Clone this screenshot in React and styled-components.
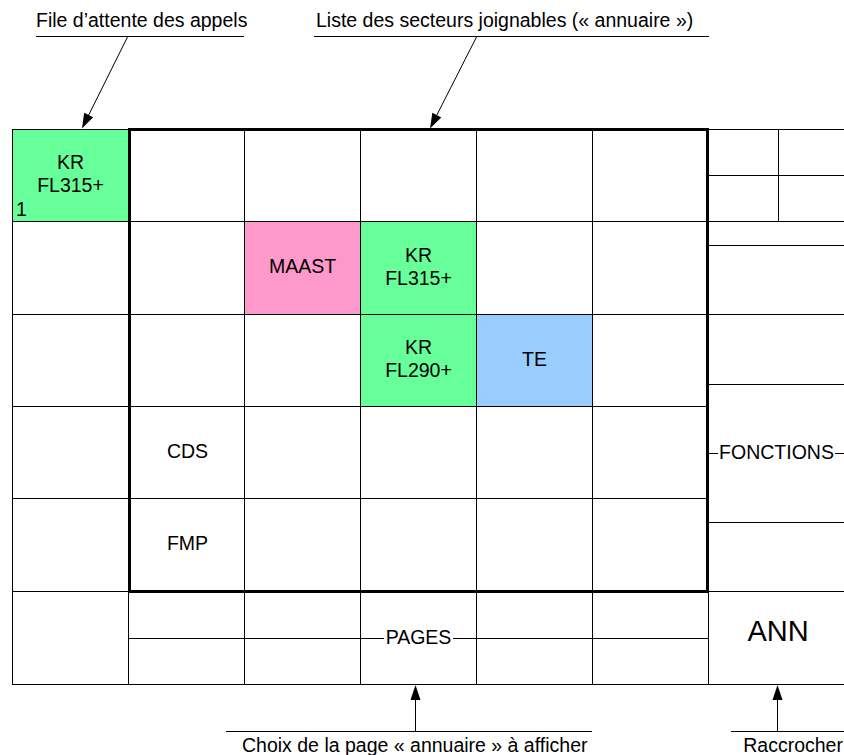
import React from 'react';
import styled, { createGlobalStyle } from 'styled-components';

const INK = '#000';
const GREEN = '#66ff99';
const PINK = '#ff99cc';
const BLUE = '#99ccff';

const GlobalStyle = createGlobalStyle`
  html, body { margin: 0; padding: 0; background: #fff; }
  body { font-family: "Liberation Sans", Arial, sans-serif; color: ${INK}; }
  *, *::before, *::after { box-sizing: border-box; }
`;

const Page = styled.div`
  position: relative;
  width: 844px;
  height: 755px;
  overflow: hidden;
  background: #fff;
  font-family: "Liberation Sans", Arial, sans-serif;
  font-size: 19.5px;
  line-height: 22px;
  color: ${INK};
`;

/* ---------- captions ---------- */
const TopBand = styled.div`
  display: flex;
  align-items: flex-start;
  gap: 70px;
  height: 128px;
  padding-left: 36px;
`;

const TopCaption = styled.div`
  width: ${(p) => p.$width}px;
  margin-top: 9px;
  padding-left: ${(p) => p.$indent}px;
  padding-bottom: 5px;
  border-bottom: 1px solid ${INK};
  white-space: nowrap;
`;

const BottomBand = styled.div`
  display: flex;
  align-items: flex-start;
  gap: 139px;
  height: 70px;
  padding-left: 226px;
`;

const BottomCaption = styled.div`
  width: ${(p) => p.$width}px;
  margin-top: 46px;
  padding-left: ${(p) => p.$indent}px;
  padding-top: 2px;
  border-top: 1px solid ${INK};
  white-space: nowrap;
`;

/* ---------- board ---------- */
const Board = styled.div`
  display: grid;
  grid-template-columns: 116px 581px 135px;
  grid-template-rows: 465px 92px;
  width: 832px;
  margin-left: 12px;
`;

const QueueColumn = styled.div`
  grid-column: 1;
  grid-row: 1 / span 2;
  display: flex;
  flex-direction: column;
  margin-top: 1px;
  border-top: 1px solid ${INK};
  border-left: 1px solid ${INK};
`;

const QueueCell = styled.div`
  position: relative;
  height: ${(p) => p.$h}px;
  flex: none;
  display: flex;
  align-items: center;
  justify-content: center;
  padding-bottom: 3px;
  text-align: center;
  line-height: 23px;
  background: ${(p) => p.$fill || '#fff'};
  border-bottom: 1px solid ${INK};
`;

const Rank = styled.span`
  position: absolute;
  left: 3px;
  bottom: 1px;
  line-height: 22px;
`;

const Directory = styled.div`
  grid-column: 2;
  grid-row: 1;
  display: grid;
  grid-template-columns: 114px 116px 116px 116px 113px;
  grid-template-rows: 91px 93px 92px 92px 91px;
  border: 3px solid ${INK};
`;

const Slot = styled.div`
  display: flex;
  align-items: center;
  justify-content: center;
  padding-bottom: 3px;
  text-align: center;
  line-height: 23px;
  background: ${(p) => p.$fill || '#fff'};
  border-right: ${(p) => (p.$lastCol ? 'none' : `1px solid ${INK}`)};
  border-bottom: ${(p) => (p.$lastRow ? 'none' : `1px solid ${INK}`)};
`;

/* ---------- function panel ---------- */
const SidePanel = styled.div`
  grid-column: 3;
  grid-row: 1;
  align-self: start;
  display: flex;
  flex-direction: column;
  margin-top: 1px;
  border-top: 1px solid ${INK};
`;

const KeyGrid = styled.div`
  display: grid;
  grid-template-columns: 70px 65px;
  grid-template-rows: 46px 46px;
`;

const Key = styled.div`
  border-bottom: 1px solid ${INK};
  border-right: ${(p) => (p.$divided ? `1px solid ${INK}` : 'none')};
`;

const Strip = styled.div`
  height: ${(p) => p.$h}px;
  flex: none;
  border-bottom: 1px solid ${INK};
`;

const LabeledStrip = styled.div`
  height: ${(p) => p.$h}px;
  flex: none;
  display: flex;
  align-items: center;
  border-bottom: 1px solid ${INK};
`;

const Rule = styled.div`
  flex: 1;
  height: 1px;
  background: ${INK};
`;

const Tag = styled.span`
  flex: none;
  padding: 0 ${(p) => p.$pad}px;
  margin-bottom: 3px;
  background: #fff;
  white-space: nowrap;
`;

const HangUp = styled.div`
  grid-column: 3;
  grid-row: 2;
  display: flex;
  align-items: center;
  justify-content: center;
  padding-bottom: 14px;
  padding-left: 3px;
  font-size: 29px;
  line-height: 33px;
  border-bottom: 1px solid ${INK};
`;

/* ---------- pages ---------- */
const PagesRow = styled.div`
  grid-column: 2;
  grid-row: 2;
  display: grid;
  grid-template-columns: repeat(5, 116px);
  border-left: 1px solid ${INK};
`;

const PageColumn = styled.div`
  display: flex;
  flex-direction: column;
  border-right: 1px solid ${INK};
  border-bottom: 1px solid ${INK};
`;

const PageHalf = styled.div`
  height: 46px;
  flex: none;
  border-bottom: 1px solid ${INK};
`;

const PageLabelColumn = styled.div`
  display: flex;
  align-items: center;
  border-right: 1px solid ${INK};
  border-bottom: 1px solid ${INK};
`;

/* ---------- arrows ---------- */
const Overlay = styled.svg`
  position: absolute;
  left: 0;
  top: 0;
  pointer-events: none;
`;

function Arrow({ x1, y1, x2, y2 }) {
  const dx = x2 - x1;
  const dy = y2 - y1;
  const len = Math.hypot(dx, dy);
  const ux = dx / len;
  const uy = dy / len;
  const head = 15;
  const half = 5;
  const bx = x2 - ux * head;
  const by = y2 - uy * head;
  const px = -uy * half;
  const py = ux * half;
  return (
    <g>
      <line x1={x1} y1={y1} x2={bx} y2={by} stroke={INK} strokeWidth="1" />
      <polygon
        points={`${x2},${y2} ${bx + px},${by + py} ${bx - px},${by - py}`}
        fill={INK}
      />
    </g>
  );
}

const queue = [
  { h: 92, fill: GREEN, lines: ['KR', 'FL315+'], rank: '1' },
  { h: 93 },
  { h: 92 },
  { h: 92 },
  { h: 93 },
  { h: 93 },
];

const directory = [
  [null, null, null, null, null],
  [null, { fill: PINK, lines: ['MAAST'] }, { fill: GREEN, lines: ['KR', 'FL315+'] }, null, null],
  [null, null, { fill: GREEN, lines: ['KR', 'FL290+'] }, { fill: BLUE, lines: ['TE'] }, null],
  [{ lines: ['CDS'] }, null, null, null, null],
  [{ lines: ['FMP'] }, null, null, null, null],
];

function Lines({ lines }) {
  if (!lines) return null;
  return (
    <div>
      {lines.map((l, i) => (
        <div key={i}>{l}</div>
      ))}
    </div>
  );
}

export default function App() {
  return (
    <>
      <GlobalStyle />
      <Page>
        <TopBand>
          <TopCaption $width={208} $indent={0}>File d’attente des appels</TopCaption>
          <TopCaption $width={395} $indent={2}>
            Liste des secteurs joignables (« annuaire »)
          </TopCaption>
        </TopBand>

        <Board>
          <QueueColumn>
            {queue.map((c, i) => (
              <QueueCell key={i} $h={c.h} $fill={c.fill}>
                <Lines lines={c.lines} />
                {c.rank && <Rank>{c.rank}</Rank>}
              </QueueCell>
            ))}
          </QueueColumn>

          <Directory>
            {directory.map((row, r) =>
              row.map((cell, c) => (
                <Slot
                  key={`${r}-${c}`}
                  $fill={cell && cell.fill}
                  $lastCol={c === 4}
                  $lastRow={r === 4}
                >
                  <Lines lines={cell && cell.lines} />
                </Slot>
              ))
            )}
          </Directory>

          <SidePanel>
            <KeyGrid>
              <Key $divided />
              <Key />
              <Key $divided />
              <Key />
            </KeyGrid>
            <Strip $h={24} />
            <Strip $h={69} />
            <Strip $h={70} />
            <LabeledStrip $h={138}>
              <Rule />
              <Tag $pad={1}>FONCTIONS</Tag>
              <Rule />
            </LabeledStrip>
            <Strip $h={69} />
          </SidePanel>

          <PagesRow>
            <PageColumn>
              <PageHalf />
            </PageColumn>
            <PageColumn>
              <PageHalf />
            </PageColumn>
            <PageLabelColumn>
              <Rule />
              <Tag $pad={2}>PAGES</Tag>
              <Rule />
            </PageLabelColumn>
            <PageColumn>
              <PageHalf />
            </PageColumn>
            <PageColumn>
              <PageHalf />
            </PageColumn>
          </PagesRow>

          <HangUp>ANN</HangUp>
        </Board>

        <BottomBand>
          <BottomCaption $width={367} $indent={16}>
            Choix de la page « annuaire » à afficher
          </BottomCaption>
          <BottomCaption $width={113} $indent={12}>
            Raccrocher
          </BottomCaption>
        </BottomBand>

        <Overlay width="844" height="755" viewBox="0 0 844 755">
          <Arrow x1={127.5} y1={37} x2={82} y2={128.5} />
          <Arrow x1={476.5} y1={37} x2={430} y2={128.5} />
          <Arrow x1={415.5} y1={731} x2={415.5} y2={685} />
          <Arrow x1={777.5} y1={731} x2={777.5} y2={685} />
        </Overlay>
      </Page>
    </>
  );
}
